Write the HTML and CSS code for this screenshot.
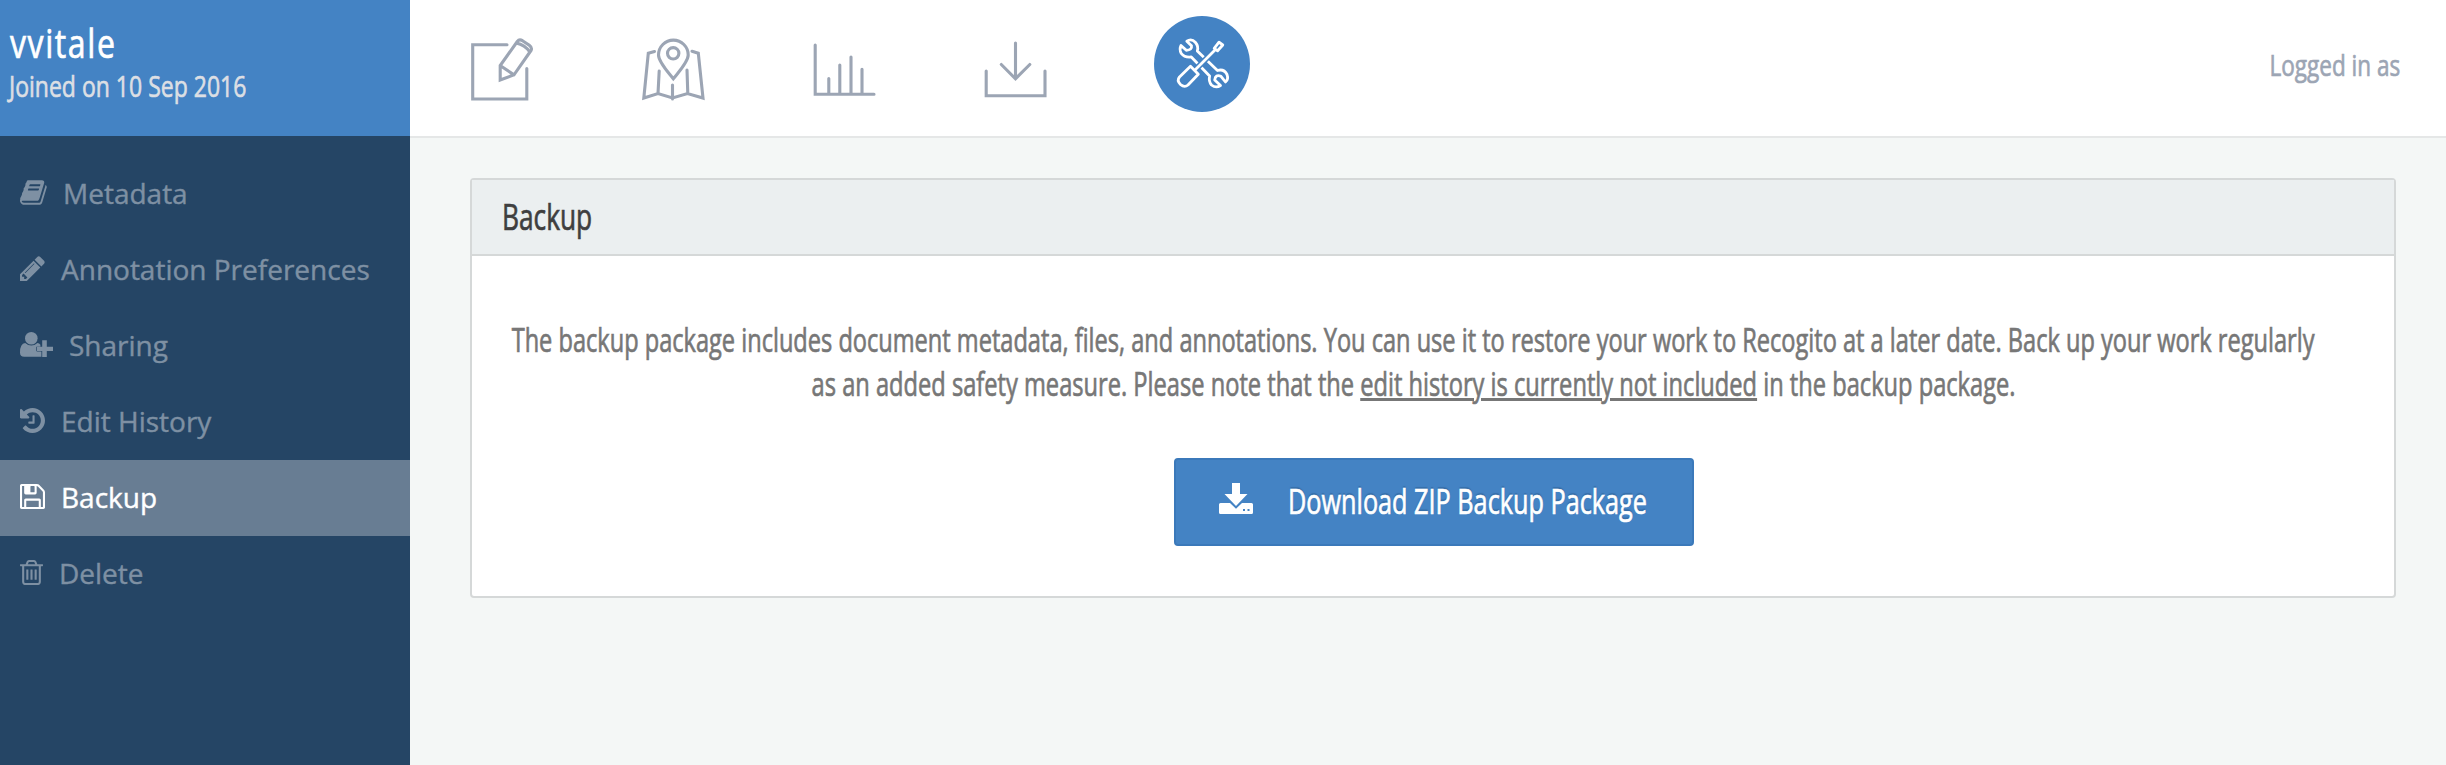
FILE: index.html
```html
<!DOCTYPE html>
<html lang="en">
<head>
<meta charset="utf-8">
<title>Backup</title>
<link rel="stylesheet" href="styles.css">
</head>
<body>
<div class="app">
  <aside class="sidebar">
    <div class="user">
      <div class="user-name"><span class="narrow">vvitale</span></div>
      <div class="user-joined"><span class="narrow">Joined on 10 Sep 2016</span></div>
    </div>
    <nav class="menu">
      <a class="item"><svg width="27" height="25" viewBox="64 128 1680 1536"><path d="M1703 478q40 57 18 129l-275 906q-19 64-76.5 107.5t-122.5 43.5h-923q-77 0-148.5-53.5t-99.5-131.5q-24-67-2-127 0-4 3-27t4-37q1-8-3-21.5t-3-19.5q2-11 8-21t16.5-23.5 16.5-23.5q23-38 45-91.5t30-91.5q3-10 .5-30t-.5-28q3-11 17-28t17-23q21-36 42-92t25-90q1-9-2.5-32t.5-28q4-13 22-30.5t22-22.5q19-26 42.5-84.5t27.5-96.5q1-8-3-25.5t-2-26.5q2-8 9-18t18-23 17-21q8-12 16.5-30.5t15-35 16-36 19.5-32 26.5-23.5 36-11.5 47.5 5.5l-1 3q38-9 51-9h761q74 0 114 56t18 130l-274 906q-36 119-71.5 153.5t-128.5 34.5h-869q-27 0-38 15-11 16-1 43 24 70 144 70h923q29 0 56-15.5t35-41.5l300-987q7-22 5-57 38 15 59 43zm-1064 2q-4 13 2 22.5t20 9.5h608q13 0 25.5-9.5t16.5-22.5l21-64q4-13-2-22.5t-20-9.5h-608q-13 0-25.5 9.5t-16.5 22.5zm-83 256q-4 13 2 22.5t20 9.5h608q13 0 25.5-9.5t16.5-22.5l21-64q4-13-2-22.5t-20-9.5h-608q-13 0-25.5 9.5t-16.5 22.5z"/></svg><span>Metadata</span></a>
      <a class="item"><svg width="25" height="25" viewBox="128 128 1536 1536"><path d="M491 1536l91-91-235-235-91 91v107h128v128h107zm523-928q0-22-22-22-10 0-17 7l-542 542q-7 7-7 17 0 22 22 22 10 0 17-7l542-542q7-7 7-17zm-54-192l416 416-832 832h-416v-416zm683 96q0 53-37 90l-166 166-416-416 166-165q36-38 90-38 53 0 91 38l235 234q37 39 37 91z"/></svg><span>Annotation Preferences</span></a>
      <a class="item"><svg width="33" height="25" viewBox="0 0 33 25"><circle cx="11.3" cy="6.3" r="6.3"/><path d="M5.2 11Q8 13.6 11.3 13.6T17.4 11Q19.3 11.2 20.4 12.8V14.4H17.2Q16.3 14.4 16.3 15.3V18.5Q16.3 19.4 17.2 19.4H21.4V24.8H4.2Q0 24.8 0 20.4 0 11.6 5.2 11zM22.2 8.2H26.8V14.8H33V18.9H26.8V25H22.2V18.9H17V14.8H22.2z"/></svg><span>Sharing</span></a>
      <a class="item"><svg width="25" height="25" viewBox="128 128 1536 1536"><path d="M1664 896q0 156-61 298t-164 245-245 164-298 61q-172 0-327-72.5t-264-204.5q-7-10-6.5-22.5t8.5-20.5l137-138q10-9 25-9 16 2 23 12 73 95 179 147t225 52q104 0 198.5-40.5t163.5-109.5 109.5-163.5 40.5-198.5-40.5-198.5-109.5-163.5-163.5-109.5-198.5-40.5q-98 0-188 35.5t-160 101.5l137 138q31 30 14 69-17 40-59 40h-448q-26 0-45-19t-19-45v-448q0-42 40-59 39-17 69 14l130 129q107-101 244.5-156.5t284.5-55.5q156 0 298 61t245 164 164 245 61 298zm-640-288v448q0 14-9 23t-23 9h-320q-14 0-23-9t-9-23v-64q0-14 9-23t23-9h224v-352q0-14 9-23t23-9h64q14 0 23 9t9 23z"/></svg><span>Edit History</span></a>
      <a class="item active"><svg width="25" height="25" viewBox="128 128 1536 1536"><path d="M512 1536h768v-384h-768v384zm896 0h128v-896q0-14-10-38.5t-20-34.5l-281-281q-10-10-34-20t-39-10v416q0 40-28 68t-68 28h-576q-40 0-68-28t-28-68v-416h-128v1280h128v-416q0-40 28-68t68-28h832q40 0 68 28t28 68v416zm-384-928v-320q0-13-9.5-22.5t-22.5-9.5h-192q-13 0-22.5 9.5t-9.5 22.5v320q0 13 9.5 22.5t22.5 9.5h192q13 0 22.5-9.5t9.5-22.5zm640 32v928q0 40-28 68t-68 28h-1344q-40 0-68-28t-28-68v-1344q0-40 28-68t68-28h928q40 0 88 20t76 48l280 280q28 28 48 76t20 88z"/></svg><span>Backup</span></a>
      <a class="item"><svg width="23" height="25" viewBox="192 128 1408 1536"><path d="M704 736v576q0 14-9 23t-23 9h-64q-14 0-23-9t-9-23v-576q0-14 9-23t23-9h64q14 0 23 9t9 23zm256 0v576q0 14-9 23t-23 9h-64q-14 0-23-9t-9-23v-576q0-14 9-23t23-9h64q14 0 23 9t9 23zm256 0v576q0 14-9 23t-23 9h-64q-14 0-23-9t-9-23v-576q0-14 9-23t23-9h64q14 0 23 9t9 23zm128 724v-948h-896v948q0 22 7 40.5t14.5 27 10.5 8.5h832q3 0 10.5-8.5t14.5-27 7-40.5zm-672-1076h448l-48-117q-7-9-17-11h-317q-10 2-17 11zm928 32v64q0 14-9 23t-23 9h-96v948q0 83-47 143.5t-113 60.5h-832q-66 0-113-58.5t-47-141.5v-952h-96q-14 0-23-9t-9-23v-64q0-14 9-23t23-9h309l70-167q15-37 54-63t79-26h320q40 0 79 26t54 63l70 167h309q14 0 23 9t9 23z"/></svg><span>Delete</span></a>
    </nav>
  </aside>
  <div class="main">
    <header class="topbar">
      <nav class="tools">
        <svg class="tool" width="64" height="66" viewBox="470 36 64 66"><path d="M507 44.7H472.7V99H526.8V68.5M517.3 41.5L500.2 65.5V80L514 74.8L531 50.5M500.5 65.8L514 74.8M517.3 41.5Q519.3 38.8 522.5 40.7L529.3 45.3Q532.5 47.8 531 50.5M516.2 43Q525 44.8 529.8 52"/></svg>
        <svg class="tool" width="64" height="66" viewBox="641 36 64 66"><path d="M654.5 51.5L648.3 53.2L643.8 98L658 93.5L672.5 98L687.5 93.5L703 98L698.3 53.2L692 51.3M659.2 71L658 93.5M672.5 85V99M687 70L687.8 93.5M673.3 78.8C668 72 658.5 62 658.5 55A14.8 14.8 0 0 1 688.2 55C688.2 62 678.6 72 673.3 78.8z"/><circle cx="673.2" cy="53.3" r="5.7"/></svg>
        <svg class="tool" width="64" height="66" viewBox="812 36 64 66"><path d="M815.2 45V94.2H874M828.8 78.5V93M839.8 65V93M851 57V93M862 69.3V93"/></svg>
        <svg class="tool" width="64" height="66" viewBox="983 36 64 66"><path d="M986.2 71V95.8H1045V71M1015.5 43V78M1001.3 64.5L1015.5 78.8L1029.8 64.5"/></svg>
        <span class="tool-active"><svg width="96" height="96" viewBox="1154 16 96 96"><path d="M1186.8 41.2Q1191.5 38 1195.5 42.5Q1198.8 46.5 1197.3 51L1217.5 70.5Q1224 68.5 1227 74.5Q1228.8 79.5 1225.5 82L1221 76.3Q1215.5 74 1214.7 80L1220.5 85.5Q1216 88.5 1211.5 85Q1208.5 81.5 1209.6 76L1191.3 57Q1184.5 57.8 1181.3 53.5Q1179 49.5 1181 45.5L1186.3 50.3Q1192.3 50 1191.5 45.8z"/><path class="gap" d="M1196 69L1215 50"/><path d="M1195.5 69.5L1215.5 49.5M1214.2 48.3L1219 42.2L1222.8 45L1217.6 50.8zM1190.5 66.3L1198.3 74.3L1188 85Q1184.5 88 1180.5 84.5Q1176.5 80.5 1179.5 77z"/></svg></span>
      </nav>
      <div class="login"><span class="narrow">Logged in as</span></div>
    </header>
    <section class="card">
      <h2 class="card-title"><span class="narrow">Backup</span></h2>
      <div class="card-body">
        <p class="info">
          <span class="narrow">The backup package includes document metadata, files, and annotations. You can use it to restore your work to Recogito at a later date. Back up your work regularly</span>
          <span class="narrow last">as an added safety measure. Please note that the <u>edit history is currently not included</u> in the backup package.</span>
        </p>
        <a class="download"><svg width="34" height="31" viewBox="0 0 34 31"><path d="M13 0H21V11H28.5L17 23L5.5 11H13zM1.5 20H11L17 25.8L23 20H32.5Q34 20 34 21.5V29.5Q34 31 32.5 31H1.5Q0 31 0 29.5V21.5Q0 20 1.5 20z"/><path class="dots" d="M24 26h2v2h-2zM28.5 26h2v2h-2z"/></svg><span class="narrow">Download ZIP Backup Package</span></a>
      </div>
    </section>
  </div>
</div>
</body>
</html>
```
FILE: styles.css
```css
* { box-sizing: border-box; }
body { margin: 0; font-family: "Open Sans", "Noto Sans", sans-serif; background: #f4f7f6; overflow: hidden; }
.app { display: flex; width: 2446px; height: 765px; overflow: hidden; }
.narrow { display: inline-block; white-space: nowrap; transform: scaleX(.74); transform-origin: 0 50%; -webkit-text-stroke: .7px currentColor; }
.sidebar { flex: 0 0 410px; background: #254565; }
.user { height: 136px; padding: 19px 0 0 9px; background: #4483c4; }
.user-name { padding-left: 1px; font-size: 40px; line-height: 47px; letter-spacing: 2px; color: #fff; }
.user-name .narrow { transform: scaleX(.8); }
.user-joined { font-size: 30px; line-height: 40px; color: #dcdfe4; }
.user-joined .narrow { transform: scaleX(.767); }
.menu { padding-top: 20px; }
.item { display: flex; align-items: center; gap: 16px; height: 76px; padding: 0 0 3px 20px; font-size: 28px; color: #7e90a3; -webkit-text-stroke: .4px currentColor; }
.item svg { flex: none; fill: currentColor; }
.item.active { background: #687d93; color: #fff; }
.main { flex: 1; min-width: 0; }
.topbar { display: flex; justify-content: space-between; height: 138px; border-bottom: 2px solid #e5e7e7; background: #fff; }
.tools { display: flex; gap: 107px; padding-left: 60px; }
.tool { margin-top: 36px; fill: none; stroke: #9ca5b4; stroke-width: 3.1; stroke-linecap: round; }
.tool-active { width: 96px; height: 96px; margin-top: 16px; border-radius: 50%; background: #4483c4; }
.tool-active svg { display: block; fill: none; stroke: #fff; stroke-width: 2.8; stroke-linejoin: round; }
.tool-active .gap { stroke: #4483c4; stroke-width: 6; }
.login { padding-right: 46px; font-size: 29px; line-height: 129px; color: #9ca5b4; }
.login .narrow { transform: scaleX(.777); transform-origin: 100% 50%; }
.card { width: 1926px; margin: 40px 0 0 60px; border: 2px solid #d5d8d8; border-radius: 4px; background: #fff; }
.card-title { height: 76px; margin: 0; padding-left: 30px; border-bottom: 2px solid #d5d8d8; background: #ebeff0; font-size: 36px; font-weight: 400; line-height: 74px; color: #3f3f3f; }
.card-title .narrow { transform: scaleX(.73); }
.card-body { display: flex; flex-direction: column; align-items: center; padding: 62px 0 50px; }
.info { display: flex; flex-direction: column; align-items: center; width: 1804px; margin: 0 39px 52px 0; font-size: 32px; line-height: 44px; color: #777; }
.info .narrow { transform: scaleX(.737); transform-origin: 50% 50%; }
.info .last { transform: scaleX(.739); }
.download { display: flex; align-items: center; gap: 35px; width: 520px; height: 88px; margin-left: 2px; padding: 0 0 3px 43px; border: 2px solid #3b79ba; border-radius: 4px; background: #4483c4; color: #fff; font-size: 35px; text-shadow: 0 -2px 1px #376fa9; }
.download .narrow { transform: scaleX(.721); }
.download svg { flex: none; margin-bottom: 4px; fill: #fff; }
.download .dots { fill: #4483c4; }
```
